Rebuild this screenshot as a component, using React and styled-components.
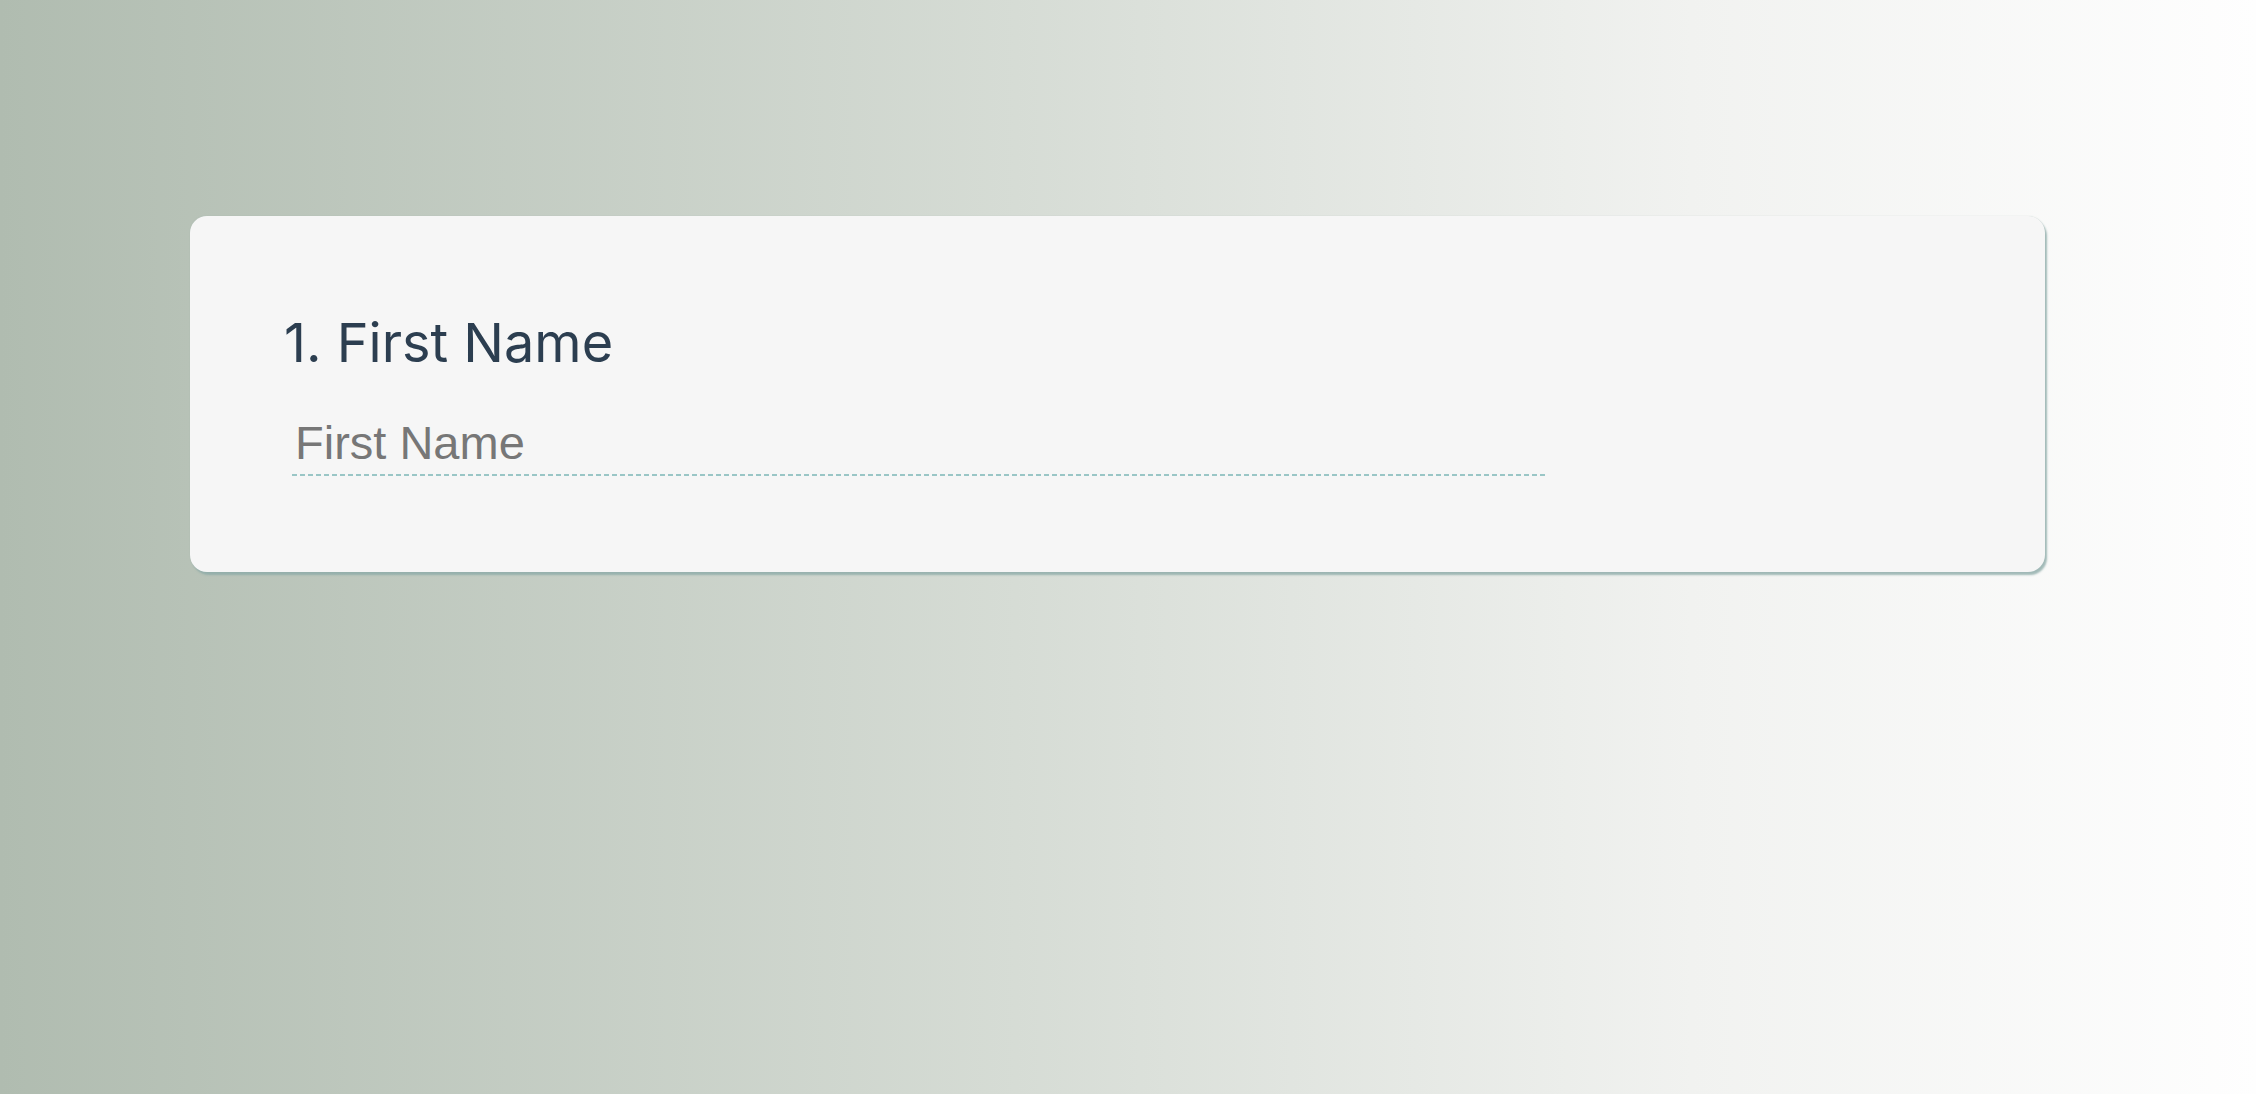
import React from 'react';
import styled, { createGlobalStyle } from 'styled-components';

const GlobalStyle = createGlobalStyle`
  html, body {
    margin: 0;
    padding: 0;
  }
  body {
    min-height: 100vh;
    background: linear-gradient(to right, #b0bcb0 0%, #d6dcd5 45%, #f1f2f0 75%, #fefefe 100%);
    font-family: Inter, "Noto Sans", sans-serif;
  }
`;

const Page = styled.main`
  padding: 216px 211px 0 190px;
`;

const QuestionCard = styled.section`
  background: #f6f6f6;
  border-radius: 17px;
  padding: 95px 0 96px 94px;
  box-shadow: 2px 3px 2px rgba(140, 170, 168, 0.8), 0 0 1px rgba(150, 175, 172, 0.55);
`;

const QuestionTitle = styled.h2`
  margin: 0;
  font-family: Inter, "Noto Sans", sans-serif;
  font-weight: 400;
  font-size: 54px;
  line-height: 64px;
  letter-spacing: 0;
  color: #2c3e50;
`;

const TextInput = styled.input`
  display: block;
  box-sizing: border-box;
  width: 1253px;
  height: 61px;
  margin: 40px 0 0 8px;
  padding: 0 3px 7px 3px;
  border: none;
  outline: none;
  font-family: "Liberation Sans", Arial, sans-serif;
  font-size: 47px;
  color: #2c3e50;
  background-color: transparent;
  background-image: linear-gradient(to right, #9ac6c6 62.5%, transparent 62.5%);
  background-size: 8px 2px;
  background-position: left bottom;
  background-repeat: repeat-x;

  &::placeholder {
    color: #777777;
    opacity: 1;
  }
`;

const App = () => (
  <>
    <GlobalStyle />
    <Page>
      <QuestionCard>
        <QuestionTitle>1. First Name</QuestionTitle>
        <TextInput type="text" placeholder="First Name" />
      </QuestionCard>
    </Page>
  </>
);

export default App;
